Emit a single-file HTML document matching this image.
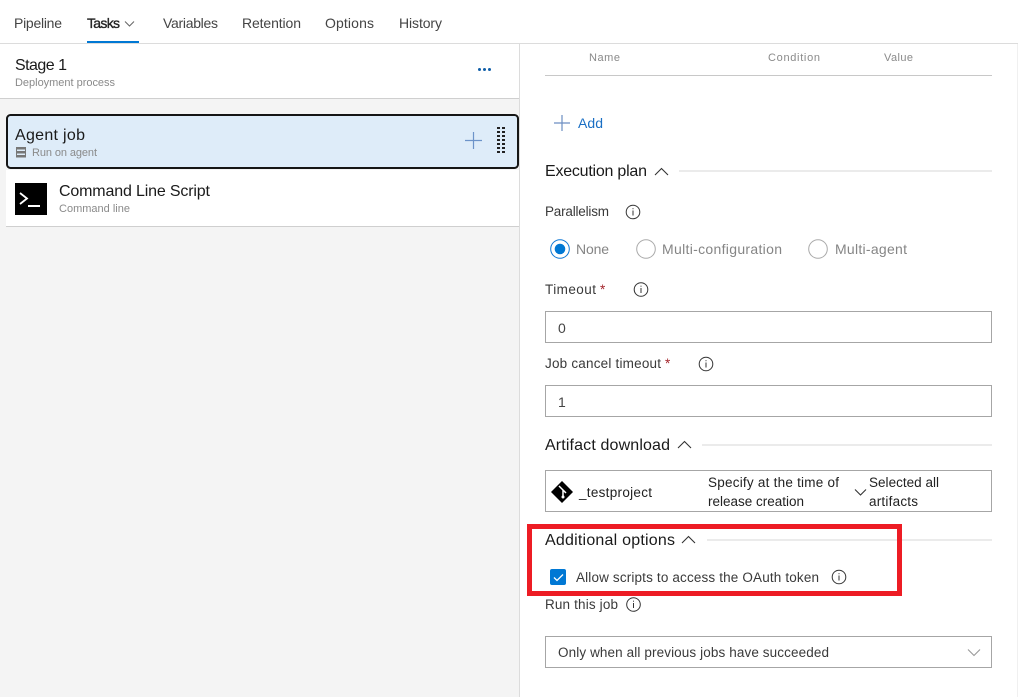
<!DOCTYPE html>
<html><head><meta charset="utf-8"><style>
html,body{margin:0;padding:0;background:#fff;width:1018px;height:697px;overflow:hidden}
svg{display:block}
text{font-family:"Liberation Sans",sans-serif;font-size:14px;fill:#333}
.t{font-size:14px;fill:#444}
.h{font-size:16px;fill:#1a1a1a}
.s{font-size:11px;fill:#8a8a8a}
.g{font-size:14px;fill:#858585}
.l{font-size:13.5px;fill:#3a3a3a}
.box{fill:#fff;stroke:#a6a6a6;stroke-width:1}
.ch{fill:none;stroke:#333;stroke-width:1.1}
.i circle{fill:none;stroke:#333;stroke-width:1}
.i rect{fill:#333}
</style></head><body>
<svg width="1018" height="697" viewBox="0 0 1018 697" xmlns="http://www.w3.org/2000/svg">
<defs>
<g id="info" class="i"><circle r="6.8"/><rect x="-0.5" y="-1.5" width="1" height="5"/><rect x="-0.5" y="-3.8" width="1" height="1"/></g>
</defs>
<rect width="1018" height="697" fill="#fff"/>
<rect x="0" y="99" width="519" height="598" fill="#f4f4f4"/>
<rect x="0" y="43" width="1018" height="1" fill="#dcdcdc"/>
<rect x="519" y="44" width="1" height="653" fill="#dcdcdc"/>
<rect x="1017" y="44" width="1" height="653" fill="#f0f0f0"/>
<rect x="0" y="98" width="519" height="1" fill="#cfcfcf"/>

<!-- tabs -->
<text class="t" x="14" y="28" textLength="48">Pipeline</text>
<text class="t" x="87" y="28" textLength="33" style="fill:#222;stroke:#222;stroke-width:.35">Tasks</text>
<path d="M125 21.500l4.500 4.500 4.500-4.500" fill="none" stroke="#666" stroke-width="1"/>
<text class="t" x="163" y="28" textLength="55">Variables</text>
<text class="t" x="242" y="28" textLength="59">Retention</text>
<text class="t" x="325" y="28" textLength="49">Options</text>
<text class="t" x="399" y="28" textLength="43">History</text>
<rect x="87" y="41" width="52" height="2" fill="#0078d4"/>

<!-- stage -->
<text class="h" x="15" y="70" textLength="52">Stage 1</text>
<text class="s" x="15" y="86" textLength="100">Deployment process</text>
<g fill="#0f5ea8"><circle cx="479.500" cy="69.500" r="1.500"/><circle cx="484.500" cy="69.500" r="1.500"/><circle cx="489.500" cy="69.500" r="1.500"/></g>

<!-- agent job -->
<rect x="7" y="115" width="511" height="53" rx="3.5" fill="#deecf9" stroke="#151515" stroke-width="2"/>
<text class="h" x="15" y="140" textLength="70">Agent job</text>
<g fill="#777"><rect x="16" y="147" width="10" height="2.500"/><rect x="16" y="151" width="10" height="2.500"/><rect x="16" y="155" width="10" height="2.500"/><rect x="16" y="147" width="1" height="10.500"/><rect x="25" y="147" width="1" height="10.500"/></g>
<text class="s" x="32" y="156" textLength="65">Run on agent</text>
<path d="M465 140.500h17M473.500 132v17" stroke="#6c93c9" stroke-width="1.200" fill="none"/>
<g fill="#222"><rect x="497" y="127" width="3" height="2"/><rect x="502" y="127" width="3" height="2"/><rect x="497" y="131" width="3" height="2"/><rect x="502" y="131" width="3" height="2"/><rect x="497" y="135" width="3" height="2"/><rect x="502" y="135" width="3" height="2"/><rect x="497" y="139" width="3" height="2"/><rect x="502" y="139" width="3" height="2"/><rect x="497" y="143" width="3" height="2"/><rect x="502" y="143" width="3" height="2"/><rect x="497" y="147" width="3" height="2"/><rect x="502" y="147" width="3" height="2"/><rect x="497" y="151" width="3" height="2"/><rect x="502" y="151" width="3" height="2"/></g>

<!-- command row -->
<rect x="6" y="170" width="513" height="56" fill="#fff"/>
<rect x="6" y="226" width="513" height="1" fill="#cfcfcf"/>
<rect x="15" y="183" width="32" height="32" fill="#000"/>
<path d="M20 193l7 5.500-7 5.500" fill="none" stroke="#fff" stroke-width="1.800"/>
<rect x="28" y="205" width="12" height="2" fill="#fff"/>
<text class="h" x="59" y="196" textLength="151">Command Line Script</text>
<text class="s" x="59" y="212" textLength="71">Command line</text>

<!-- table header -->
<text class="s" x="589" y="61" textLength="31">Name</text>
<text class="s" x="768" y="61" textLength="52">Condition</text>
<text class="s" x="884" y="61" textLength="29">Value</text>
<rect x="545" y="75" width="447" height="1" fill="#c8c8c8"/>
<path d="M554 123h16M562 115v16" stroke="#6c8ec2" stroke-width="1.200" fill="none"/>
<text class="t" x="578" y="128" textLength="25" style="fill:#1a6fc4">Add</text>

<!-- execution plan -->
<text class="h" x="545" y="176" textLength="102">Execution plan</text>
<path class="ch" d="M655 175l6.500-6.500 6.500 6.500"/>
<rect x="679" y="170" width="313" height="2" fill="#ebebeb"/>
<text class="l" x="545" y="216" textLength="64">Parallelism</text>
<use href="#info" x="633" y="212"/>
<circle cx="560" cy="249" r="9.300" fill="#fff" stroke="#0f78d4" stroke-width="1"/>
<circle cx="560" cy="249" r="5.300" fill="#0078d4"/>
<text class="g" x="576" y="254" textLength="33">None</text>
<circle cx="646" cy="249" r="9.300" fill="#fff" stroke="#aaa" stroke-width="1"/>
<text class="g" x="662" y="254" textLength="120">Multi-configuration</text>
<circle cx="818" cy="249" r="9.300" fill="#fff" stroke="#aaa" stroke-width="1"/>
<text class="g" x="835" y="254" textLength="72">Multi-agent</text>

<!-- timeout -->
<text class="l" x="545" y="294" textLength="51">Timeout</text>
<text class="l" x="600" y="294" style="fill:#a4262c">*</text>
<use href="#info" x="641" y="289.500"/>
<rect class="box" x="545.500" y="311.500" width="446" height="31"/>
<text class="t" x="558" y="333">0</text>
<text class="l" x="545" y="368" textLength="116">Job cancel timeout</text>
<text class="l" x="665" y="368" style="fill:#a4262c">*</text>
<use href="#info" x="706" y="364"/>
<rect class="box" x="545.500" y="385.500" width="446" height="31"/>
<text class="t" x="558" y="407">1</text>

<!-- artifact -->
<text class="h" x="545" y="450" textLength="125">Artifact download</text>
<path class="ch" d="M678 448l6.500-6.500 6.500 6.500"/>
<rect x="702" y="444" width="290" height="2" fill="#ebebeb"/>
<rect class="box" x="545.500" y="470.500" width="446" height="41"/>
<path d="M562 481l11 11-11 11-11-11z" fill="#000"/>
<path d="M559 486l4 4v7M563 490l3 3" fill="none" stroke="#fff" stroke-width="1.500"/>
<circle cx="563" cy="497" r="1.500" fill="#fff"/>
<text class="l" x="579" y="497" textLength="73" style="fill:#222">_testproject</text>
<text class="l" x="708" y="487" textLength="131" style="fill:#222">Specify at the time of</text>
<text class="l" x="708" y="506" textLength="96" style="fill:#222">release creation</text>
<path class="ch" d="M855 489.500l5.500 5.500 5.500-5.500"/>
<text class="l" x="869" y="487" textLength="70" style="fill:#222">Selected all</text>
<text class="l" x="869" y="506" textLength="49" style="fill:#222">artifacts</text>

<!-- additional options -->
<text class="h" x="545" y="545" textLength="130">Additional options</text>
<path class="ch" d="M682 543l6.500-6.500 6.500 6.500"/>
<rect x="707" y="539" width="285" height="2" fill="#ebebeb"/>
<rect x="529.500" y="526.500" width="370" height="67" fill="none" stroke="#ed1c24" stroke-width="5"/>
<rect x="550" y="569" width="16" height="16" rx="2" fill="#0078d4"/>
<path d="M554 577.500l3 3 6-6" fill="none" stroke="#fff" stroke-width="1.300"/>
<text class="l" x="576" y="582" textLength="243">Allow scripts to access the OAuth token</text>
<use href="#info" x="839" y="577"/>
<text class="l" x="545" y="609" textLength="73">Run this job</text>
<use href="#info" x="633.500" y="604.500"/>
<rect class="box" x="545.500" y="636.500" width="446" height="31"/>
<text class="l" x="558" y="657" textLength="271">Only when all previous jobs have succeeded</text>
<path d="M968 649.500l6 6 6-6" fill="none" stroke="#999" stroke-width="1.100"/>
</svg>
</body></html>
